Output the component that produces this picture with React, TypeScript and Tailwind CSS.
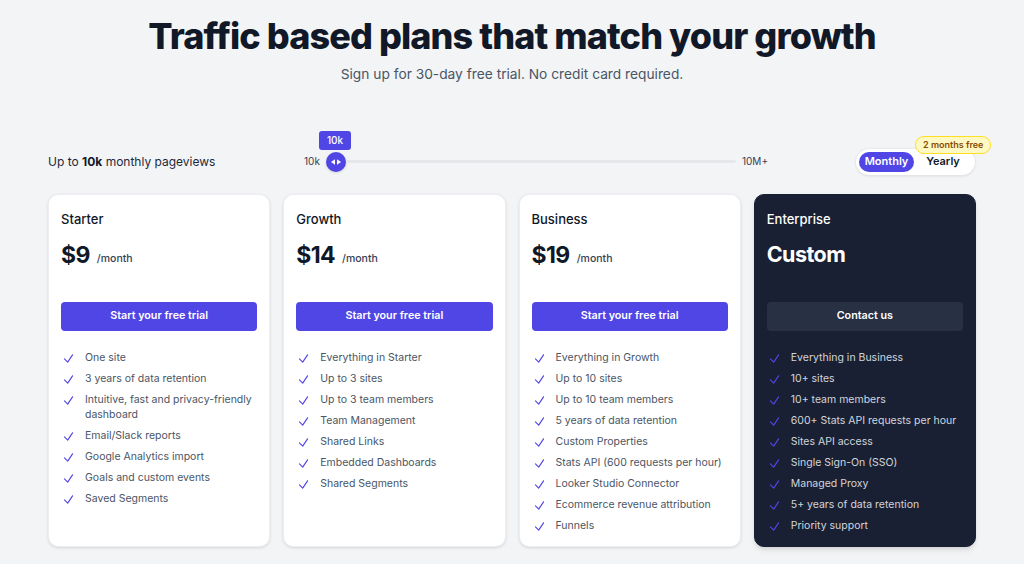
import { useState } from "react";

/* ------------------------------- Data ------------------------------------ */
type Plan = {
  name: string;
  price: string;
  cta: string;
  features: string[];
  dark?: boolean;
};

const PLANS: Plan[] = [
  {
    name: "Starter",
    price: "$9",
    cta: "Start your free trial",
    features: [
      "One site",
      "3 years of data retention",
      "Intuitive, fast and privacy-friendly dashboard",
      "Email/Slack reports",
      "Google Analytics import",
      "Goals and custom events",
      "Saved Segments",
    ],
  },
  {
    name: "Growth",
    price: "$14",
    cta: "Start your free trial",
    features: [
      "Everything in Starter",
      "Up to 3 sites",
      "Up to 3 team members",
      "Team Management",
      "Shared Links",
      "Embedded Dashboards",
      "Shared Segments",
    ],
  },
  {
    name: "Business",
    price: "$19",
    cta: "Start your free trial",
    features: [
      "Everything in Growth",
      "Up to 10 sites",
      "Up to 10 team members",
      "5 years of data retention",
      "Custom Properties",
      "Stats API (600 requests per hour)",
      "Looker Studio Connector",
      "Ecommerce revenue attribution",
      "Funnels",
    ],
  },
  {
    name: "Enterprise",
    price: "Custom",
    cta: "Contact us",
    dark: true,
    features: [
      "Everything in Business",
      "10+ sites",
      "10+ team members",
      "600+ Stats API requests per hour",
      "Sites API access",
      "Single Sign-On (SSO)",
      "Managed Proxy",
      "5+ years of data retention",
      "Priority support",
    ],
  },
];

/* ----------------------------- Pieces ------------------------------------ */
function CheckIcon() {
  return (
    <svg viewBox="0 0 24 24" fill="none" stroke="currentColor" strokeWidth={2.1} strokeLinecap="round" strokeLinejoin="round" className="w-[13px] h-[13px] mt-[1.5px] shrink-0 text-[#5046e5]">
      <path d="m4.5 12.75 6 6 9-13.5" />
    </svg>
  );
}

function PlanCard({ plan }: { plan: Plan }) {
  const dark = !!plan.dark;
  return (
    <div
      className={`rounded-[10px] px-[12px] pt-[14px] pb-[8px] flex flex-col ${
        dark
          ? "bg-[#1a2033] border border-[#1a2033] shadow-md"
          : "bg-white border border-gray-200/70 shadow-[0_1px_3px_rgba(0,0,0,0.12)]"
      }`}
    >
      <div className={`text-[13px] font-medium leading-5 ${dark ? "text-white" : "text-gray-900"}`}>{plan.name}</div>

      <div className="mt-[9px] flex items-baseline gap-[7px] h-[32px]">
        <span className={`${dark ? "text-[21.5px]" : "text-[23px]"} font-bold tracking-tight ${dark ? "text-white" : "text-gray-900"}`}>{plan.price}</span>
        {!dark && <span className="text-[10.5px] font-medium text-gray-700 relative -top-[1px]">/month</span>}
      </div>

      <button
        type="button"
        className={`mt-[32px] h-[29px] w-full rounded-[4px] text-[10.75px] font-semibold ${
          dark ? "bg-[#283043] text-white" : "bg-[#5046e5] text-white"
        }`}
      >
        {plan.cta}
      </button>

      <ul className="mt-[19.5px] flex flex-col gap-[6px]">
        {plan.features.map((f) => (
          <li key={f} className={`flex items-start gap-[10px] pl-[1px] text-[10.5px] leading-[15px] ${dark ? "text-gray-300" : "text-gray-600"}`}>
            <CheckIcon />
            <span>{f}</span>
          </li>
        ))}
      </ul>
    </div>
  );
}

/* ---------------------------- Main Component ----------------------------- */
export default function App() {
  const [yearly, setYearly] = useState(false);

  return (
    <div className="min-h-[564px] bg-[#f3f4f6] font-['Inter','Liberation_Sans',sans-serif] px-12 pt-[14px] pb-4">
      {/* Header */}
      <h1 className="text-center text-[36px] leading-[44px] font-extrabold tracking-tight text-[#111827]">
        Traffic based plans that match your growth
      </h1>
      <p className="mt-[6px] text-center text-[13.75px] text-gray-600">Sign up for 30-day free trial. No credit card required.</p>

      {/* Pageviews + billing toggle */}
      <div className="mt-[57px] flex items-center h-[40px]">
        <div className="w-[256px] text-[12px] text-gray-800">
          Up to <span className="font-bold text-gray-900">10k</span> monthly pageviews
        </div>

        <div className="w-[464px] flex items-center gap-[6px] text-[10px] text-gray-700">
          <span>10k</span>
          <div className="relative flex-1 flex items-center h-5">
            <div className="absolute -top-[21px] left-[-7px] h-[19px] px-[8px] rounded-[3px] bg-[#5046e5] text-white text-[10px] font-medium flex items-center">
              10k
            </div>
            <div className="w-5 h-5 rounded-full bg-[#5046e5] flex items-center justify-center gap-[2px] shrink-0 shadow-sm">
              <svg viewBox="0 0 6 8" className="w-[4px] h-[6px] fill-white"><path d="M6 0 0 4l6 4z" /></svg>
              <svg viewBox="0 0 6 8" className="w-[4px] h-[6px] fill-white"><path d="M0 0l6 4-6 4z" /></svg>
            </div>
            <div className="flex-1 h-[3px] rounded-full bg-gray-200" />
          </div>
          <span>10M+</span>
        </div>

        <div className="ml-auto relative mr-[1px]">
          <span className="absolute -top-[13px] left-[59px] whitespace-nowrap rounded-full border border-yellow-300 bg-yellow-100 px-[7px] py-[2px] text-[9px] font-semibold leading-3 text-yellow-800">
            2 months free
          </span>
          <div className="flex items-center h-[26px] rounded-full bg-white ring-1 ring-gray-200/70 shadow-sm p-[3px] w-[119px]">
            <button
              type="button"
              onClick={() => setYearly(false)}
              className={`h-[20px] w-[55px] rounded-full text-[11px] font-semibold ${!yearly ? "bg-[#5046e5] text-white" : "text-gray-900"}`}
            >
              Monthly
            </button>
            <button
              type="button"
              onClick={() => setYearly(true)}
              className={`h-[20px] flex-1 rounded-full text-[11px] font-semibold ${yearly ? "bg-[#5046e5] text-white" : "text-gray-900"}`}
            >
              Yearly
            </button>
          </div>
        </div>
      </div>

      {/* Plans */}
      <div className="mt-[12px] grid grid-cols-4 gap-[13px] w-[928px] h-[353px]">
        {PLANS.map((p) => (
          <PlanCard key={p.name} plan={p} />
        ))}
      </div>
    </div>
  );
}
